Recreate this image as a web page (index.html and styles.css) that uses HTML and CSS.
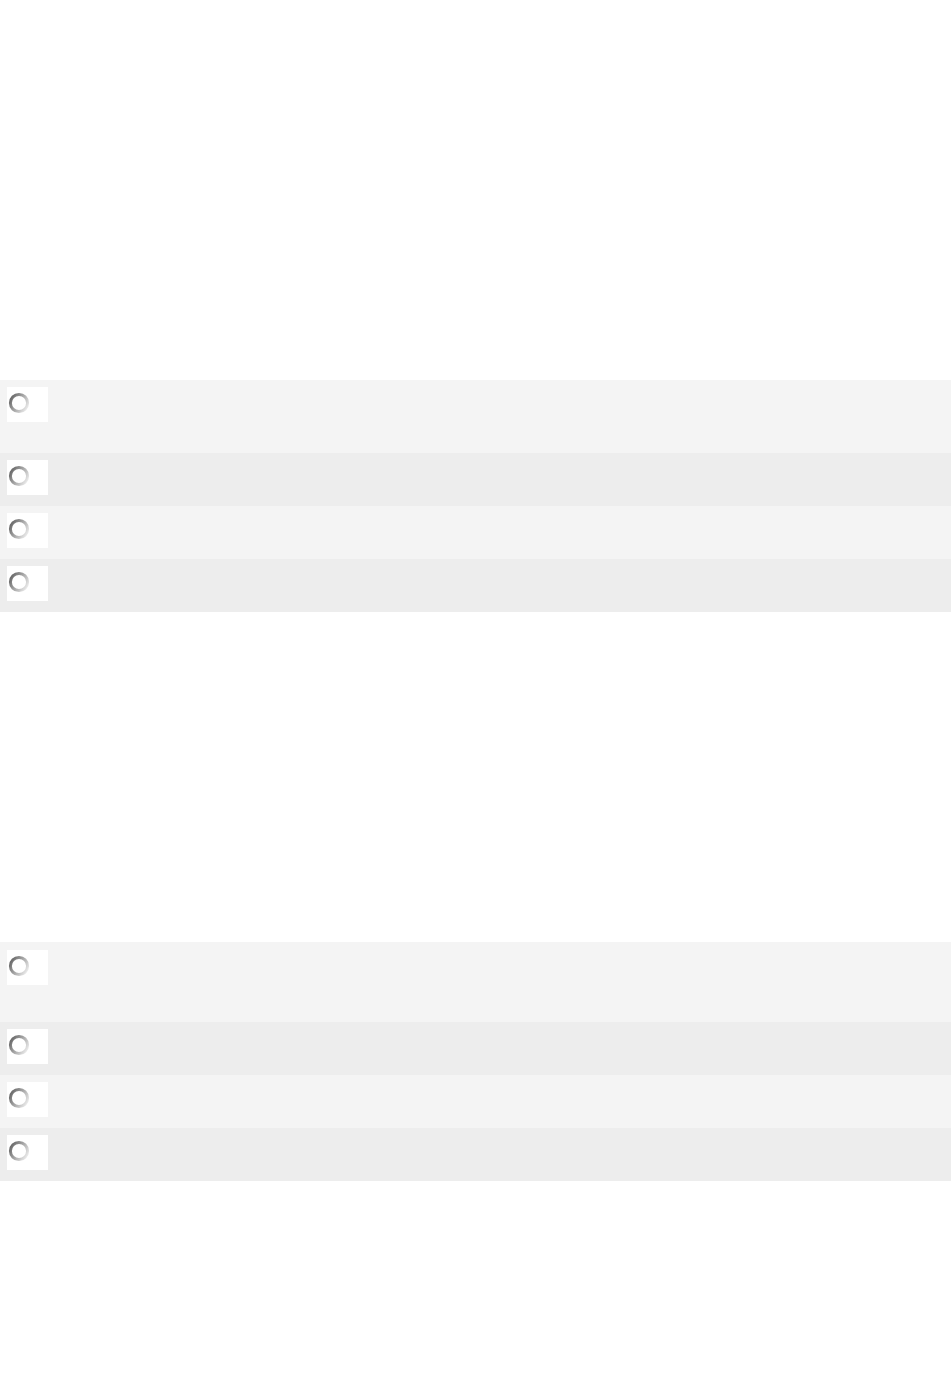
FILE: index.html
```html
<!DOCTYPE html>
<html lang="en">
<head>
    <meta charset="UTF-8">
    <meta name="viewport" content="width=device-width, initial-scale=1.0">
    <title>Quiz</title>
    <link rel="stylesheet" href="styles.css">
</head>
<body>
    <svg width="0" height="0" class="defs">
        <defs>
            <linearGradient id="ring" x1="0" y1="0.2" x2="1" y2="0.8">
                <stop offset="0" stop-color="#686868"/>
                <stop offset="0.45" stop-color="#a2a2a2"/>
                <stop offset="1" stop-color="#ebebeb"/>
            </linearGradient>
        </defs>
    </svg>

    <div class="quiz">
        <div class="question question-one">
            <ul class="choices">
                <li class="choice choice-first">
                    <span class="radio-box"><svg class="radio" width="22" height="22" viewBox="0 0 22 22"><circle cx="11" cy="11" r="8.6" fill="#fff" stroke="url(#ring)" stroke-width="3"/></svg></span>
                </li>
                <li class="choice">
                    <span class="radio-box"><svg class="radio" width="22" height="22" viewBox="0 0 22 22"><circle cx="11" cy="11" r="8.6" fill="#fff" stroke="url(#ring)" stroke-width="3"/></svg></span>
                </li>
                <li class="choice">
                    <span class="radio-box"><svg class="radio" width="22" height="22" viewBox="0 0 22 22"><circle cx="11" cy="11" r="8.6" fill="#fff" stroke="url(#ring)" stroke-width="3"/></svg></span>
                </li>
                <li class="choice">
                    <span class="radio-box"><svg class="radio" width="22" height="22" viewBox="0 0 22 22"><circle cx="11" cy="11" r="8.6" fill="#fff" stroke="url(#ring)" stroke-width="3"/></svg></span>
                </li>
            </ul>
        </div>

        <div class="question question-two">
            <ul class="choices">
                <li class="choice choice-first choice-tall">
                    <span class="radio-box"><svg class="radio" width="22" height="22" viewBox="0 0 22 22"><circle cx="11" cy="11" r="8.6" fill="#fff" stroke="url(#ring)" stroke-width="3"/></svg></span>
                </li>
                <li class="choice">
                    <span class="radio-box"><svg class="radio" width="22" height="22" viewBox="0 0 22 22"><circle cx="11" cy="11" r="8.6" fill="#fff" stroke="url(#ring)" stroke-width="3"/></svg></span>
                </li>
                <li class="choice">
                    <span class="radio-box"><svg class="radio" width="22" height="22" viewBox="0 0 22 22"><circle cx="11" cy="11" r="8.6" fill="#fff" stroke="url(#ring)" stroke-width="3"/></svg></span>
                </li>
                <li class="choice">
                    <span class="radio-box"><svg class="radio" width="22" height="22" viewBox="0 0 22 22"><circle cx="11" cy="11" r="8.6" fill="#fff" stroke="url(#ring)" stroke-width="3"/></svg></span>
                </li>
            </ul>
        </div>
    </div>
</body>
</html>
```

FILE: styles.css
```css
body {
    font-family: Arial, "Liberation Sans", sans-serif;
    margin: 0;
    background-color: #fff;
    min-height: 1387px;
}
.defs {
    position: absolute;
}
.quiz {
    padding-top: 380px;
}
.question-two {
    margin-top: 330px;
}
.choices {
    list-style: none;
    margin: 0;
    padding: 0;
}
.choice {
    display: flex;
    align-items: flex-start;
    padding: 7px 0 11px 7px;
    background-color: #f4f4f4;
}
.choice:nth-child(even) {
    background-color: #ededed;
}
.choice-first {
    padding-bottom: 31px;
}
.choice-tall {
    padding-top: 8px;
    padding-bottom: 37px;
}
.radio-box {
    display: block;
    width: 41px;
    height: 35px;
    background-color: #fff;
}
.radio {
    display: block;
    margin: 5px 0 0 1px;
}
```
